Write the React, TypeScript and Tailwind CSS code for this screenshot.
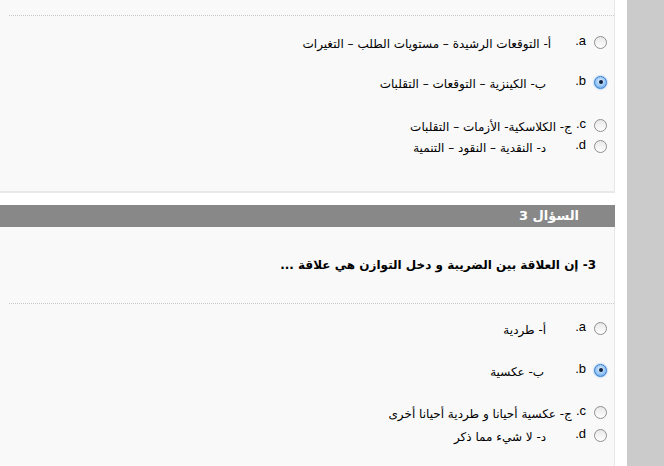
import React from 'react'

type Opt = { key: string, text: string, checked?: boolean, mt: number, gap: number }

const q2: Opt[] = [
    { key: 'a', text: 'أ- التوقعات الرشيدة – مستويات الطلب – التغيرات', mt: 16, gap: 24 },
    { key: 'b', text: 'ب- الكينزية – التوقعات – التقلبات', checked: true, mt: 20, gap: 29 },
    { key: 'c', text: 'ج- الكلاسكية- الأزمات – التقلبات', mt: 23, gap: 4 },
    { key: 'd', text: 'د- النقدية – النقود – التنمية', mt: 1, gap: 29 },
]

const q3: Opt[] = [
    { key: 'a', text: 'أ- طردية', mt: 14, gap: 29 },
    { key: 'b', text: 'ب- عكسية', checked: true, mt: 22, gap: 31 },
    { key: 'c', text: 'ج- عكسية أحيانا و طردية أحيانا أخرى', mt: 22, gap: 4 },
    { key: 'd', text: 'د- لا شيء مما ذكر', mt: 3, gap: 29 },
]

const Radio = ({ checked }: { checked?: boolean }) => {
    if (checked) {
        return (
            <span className="w-[13px] h-[13px] rounded-full border border-[#3b7fd4] bg-[radial-gradient(circle_at_50%_40%,#e6f2ff_0%,#8fc1f2_60%,#4d93e0_100%)] shadow-[0_0_2px_#5aa0ef] flex items-center justify-center shrink-0">
                <span className="w-[4px] h-[4px] rounded-full bg-[#10243f]" />
            </span>
        )
    }
    return (
        <span className="w-[13px] h-[13px] rounded-full border border-[#8e8f8f] bg-[linear-gradient(#e8e8e8,#ffffff)] shrink-0" />
    )
}

const Option = ({ o }: { o: Opt }) => {
    return (
        <div className="flex items-center h-[20px] pr-[7px]" style={{ marginTop: o.mt }}>
            <Radio checked={o.checked} />
            <span className="mr-[8px] text-[13px] text-black font-['Liberation_Sans',sans-serif] leading-none pb-[3px]">{o.key}.</span>
            <span className="text-[12px] text-black font-['DejaVu_Sans',sans-serif] leading-none pt-[3px]" style={{ marginRight: o.gap }}>{o.text}</span>
        </div>
    )
}

export default function App() {
    return (
        <div className="w-[664px] h-[466px] overflow-hidden bg-white flex font-['DejaVu_Sans',sans-serif]">
            <div dir="rtl" className="w-[615px] shrink-0 flex flex-col">
                <div className="bg-[#f9f9f9] border-r border-b-2 border-[#e8e8e8] pb-[35px]">
                    <div className="h-[16px] border-b border-dotted border-[#c8c8c8] ml-[9px]" />
                    {q2.map(o => <Option key={o.key} o={o} />)}
                </div>
                <div className="h-[12px] bg-white" />
                <div className="h-[22px] bg-[#888888] flex items-center pr-[36px]">
                    <span className="text-white text-[13px] font-bold font-['DejaVu_Sans',sans-serif]">السؤال 3</span>
                </div>
                <div className="bg-[#f9f9f9] border-r border-[#e8e8e8] flex-1">
                    <div className="h-[77px] border-b border-dotted border-[#c8c8c8] ml-[9px] pr-[18px] flex items-center">
                        <span className="text-[12px] font-bold text-black">3-  إن العلاقة بين الضريبة و دخل التوازن هي علاقة ...</span>
                    </div>
                    {q3.map(o => <Option key={o.key} o={o} />)}
                </div>
            </div>
            <div className="w-[12px] shrink-0 bg-white" />
            <div className="flex-1 bg-[#cbcbcb]" />
        </div>
    )
}
